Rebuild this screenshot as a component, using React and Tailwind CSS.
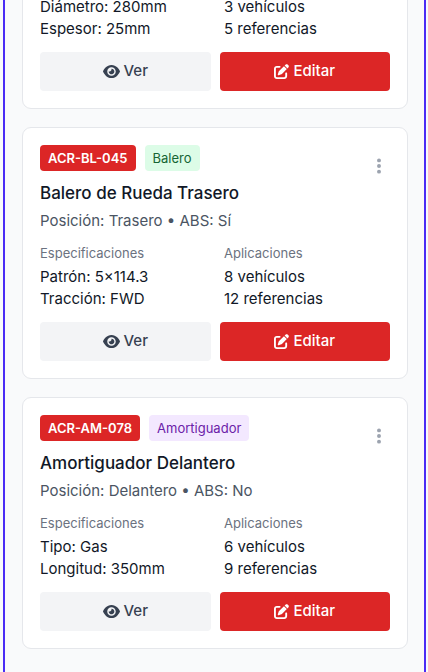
import { FaEye, FaEllipsisVertical, FaPenToSquare } from "react-icons/fa6";

const parts = [
  {
    specs: ["Diámetro: 280mm", "Espesor: 25mm"],
    uses: ["3 vehículos", "5 referencias"],
  },
  {
    sku: "ACR-BL-045",
    type: "Balero",
    typeStyle: "bg-[#dcfce7] text-[#166534]",
    name: "Balero de Rueda Trasero",
    detail: "Posición: Trasero • ABS: Sí",
    specs: ["Patrón: 5×114.3", "Tracción: FWD"],
    uses: ["8 vehículos", "12 referencias"],
  },
  {
    sku: "ACR-AM-078",
    type: "Amortiguador",
    typeStyle: "bg-[#f3e8ff] text-[#6b21a8]",
    name: "Amortiguador Delantero",
    detail: "Posición: Delantero • ABS: No",
    specs: ["Tipo: Gas", "Longitud: 350mm"],
    uses: ["6 vehículos", "9 referencias"],
  },
];

function Column({ label, lines }) {
  return (
    <div>
      {label && <p className="mb-1 text-[13px] leading-[18px] text-[#6b7280]">{label}</p>}
      {lines.map((line) => (
        <p key={line} className="text-[15px] leading-[22px] text-[#111827]">
          {line}
        </p>
      ))}
    </div>
  );
}

function PartCard({ part }) {
  const button =
    "flex h-[39px] items-center justify-center gap-1 rounded text-[15px] font-medium";
  return (
    <article className="rounded-[9px] border border-[#e5e7eb] bg-white p-[17px]">
      {part.name && (
        <header className="mb-[13px] flex items-start justify-between">
          <div>
            <div className="flex gap-[9px] text-[13px] leading-[18px]">
              <span className="rounded bg-[#dc2626] px-2 py-1 font-semibold text-white">
                {part.sku}
              </span>
              <span className={`rounded px-2 py-1 ${part.typeStyle}`}>{part.type}</span>
            </div>
            <h3 className="mt-[9px] text-[17px] leading-[26px] font-medium text-[#111827]">
              {part.name}
            </h3>
            <p className="mt-1 text-[15px] leading-[21px] text-[#4b5563]">{part.detail}</p>
          </div>
          <button
            type="button"
            aria-label="Más opciones"
            className="flex h-[42px] w-[22px] items-center justify-center text-[#9ca3af]"
          >
            <FaEllipsisVertical size={18} />
          </button>
        </header>
      )}
      <div className="grid grid-cols-2 gap-[18px]">
        <Column label={part.name && "Especificaciones"} lines={part.specs} />
        <Column label={part.name && "Aplicaciones"} lines={part.uses} />
      </div>
      <div className="mt-3 grid grid-cols-2 gap-[9px]">
        <button type="button" className={`${button} bg-[#f3f4f6] text-[#374151]`}>
          <FaEye size={17} />
          Ver
        </button>
        <button type="button" className={`${button} bg-[#dc2626] text-white`}>
          <FaPenToSquare size={15} />
          Editar
        </button>
      </div>
    </article>
  );
}

export default function App() {
  return (
    <div className="min-h-screen overflow-hidden bg-[#f9fafb] pr-[2px] pl-[3px] font-['Inter',sans-serif]">
      <main className="flex min-h-screen flex-col border-x-2 border-[#4a2cf5] pr-4 pl-[17px]">
        <div className="-mt-[22px] flex flex-col gap-[18px] pb-[18px]">
          {parts.map((part) => (
            <PartCard key={part.specs[0]} part={part} />
          ))}
        </div>
      </main>
    </div>
  );
}
